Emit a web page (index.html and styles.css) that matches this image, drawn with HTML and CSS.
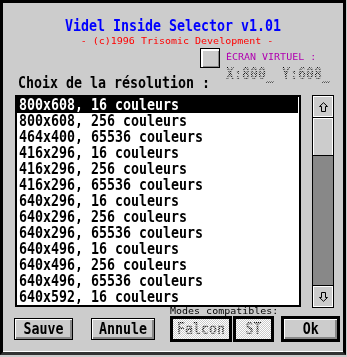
FILE: index.html
```html
<!DOCTYPE html>
<html>
<head>
<meta charset="utf-8">
<link rel="stylesheet" href="styles.css">
</head>
<body>
<div class="dialog">
  <div class="title"><span class="big">Videl Inside Selector v1.01</span></div>
  <div class="copy"><span class="small">- (c)1996 Trisomic Development -</span></div>
  <div class="top">
    <div class="virt">
      <div class="check"></div>
      <div class="virt-text">
        <div class="ecran"><span class="small">ÉCRAN VIRTUEL :</span></div>
        <div class="coords"><span class="big dith">X:800_ Y:608_</span></div>
      </div>
    </div>
    <div class="choix"><span class="big">Choix de la résolution :</span></div>
  </div>
  <div class="listrow">
    <ul class="list">
      <li class="sel"><span class="big">800x608, 16 couleurs</span></li>
      <li><span class="big">800x608, 256 couleurs</span></li>
      <li><span class="big">464x400, 65536 couleurs</span></li>
      <li><span class="big">416x296, 16 couleurs</span></li>
      <li><span class="big">416x296, 256 couleurs</span></li>
      <li><span class="big">416x296, 65536 couleurs</span></li>
      <li><span class="big">640x296, 16 couleurs</span></li>
      <li><span class="big">640x296, 256 couleurs</span></li>
      <li><span class="big">640x296, 65536 couleurs</span></li>
      <li><span class="big">640x496, 16 couleurs</span></li>
      <li><span class="big">640x496, 256 couleurs</span></li>
      <li><span class="big">640x496, 65536 couleurs</span></li>
      <li><span class="big">640x592, 16 couleurs</span></li>
    </ul>
    <div class="scroll">
      <div class="arrow up">
        <svg width="9" height="10" viewBox="0 0 9 10"><path d="M4.5 0.7 L8.5 4.5 L6.5 4.5 L6.5 9.5 L2.5 9.5 L2.5 4.5 L0.5 4.5 Z" fill="none" stroke="#000" stroke-width="1"/></svg>
      </div>
      <div class="track"><div class="thumb"></div></div>
      <div class="arrow down">
        <svg width="9" height="10" viewBox="0 0 9 10"><path d="M4.5 9.3 L8.5 5.5 L6.5 5.5 L6.5 0.5 L2.5 0.5 L2.5 5.5 L0.5 5.5 Z" fill="none" stroke="#000" stroke-width="1"/></svg>
      </div>
    </div>
  </div>
  <div class="bottom">
    <div class="btn sauve"><span class="big">Sauve</span></div>
    <div class="btn annule"><span class="big">Annule</span></div>
    <div class="modes">
      <div class="modes-label"><span class="small">Modes compatibles:</span></div>
      <div class="pair">
        <div class="btn dis falcon"><span class="big dith">Falcon</span></div>
        <div class="btn dis st"><span class="big dith">ST</span></div>
      </div>
    </div>
    <div class="btn ok"><span class="big">Ok</span></div>
  </div>
</div>
</body>
</html>
```

FILE: styles.css
```css
html, body {
  margin: 0;
  padding: 0;
}
body {
  width: 347px;
  height: 357px;
  overflow: hidden;
  background: #cccccc;
  font-family: "DejaVu Sans Mono", monospace;
}
.dialog {
  box-sizing: border-box;
  width: 346px;
  height: 355px;
  border: 3px solid #000;
  border-bottom-color: #333;
  background: #cccccc;
  box-shadow: inset 0 -1px #fff;
}
.big {
  display: block;
  font-family: "DejaVu Sans Mono", monospace;
  font-weight: bold;
  font-size: 13.3px;
  line-height: 16px;
  height: 16px;
  white-space: pre;
  transform: scaleY(1.15);
}
.small {
  display: block;
  font-family: "DejaVu Sans Mono", monospace;
  font-size: 10px;
  line-height: 8px;
  height: 8px;
  white-space: pre;
  transform: scaleY(0.8);
}
.dith {
  color: transparent;
  background: repeating-conic-gradient(#000 0 25%, transparent 0 50%) 0 0 / 2px 2px;
  -webkit-background-clip: text;
  background-clip: text;
}
.title {
  display: flex;
  justify-content: center;
  margin-top: 15px;
  height: 16px;
  color: #0000ff;
}
.copy {
  display: flex;
  justify-content: center;
  margin-top: 4px;
  height: 8px;
  padding-left: 8px;
  color: #ff0000;
}
.top {
  margin-top: 2px;
  height: 47px;
  display: grid;
  grid-template: 1fr / 1fr;
}
.top > * {
  grid-area: 1 / 1;
}
.choix {
  display: flex;
  align-self: end;
  justify-self: start;
  margin-left: 15px;
  margin-bottom: 4px;
  height: 16px;
}
.virt {
  align-self: start;
  justify-self: end;
  margin-right: 13px;
  display: flex;
}
.check {
  box-sizing: border-box;
  flex-shrink: 0;
  width: 20px;
  height: 20px;
  border: 1px solid #000;
  background: #cccccc;
  box-shadow: inset 1px 1px #fff, inset 2px 2px #fff, inset -1px -1px #888;
}
.virt-text {
  margin-left: 6px;
  flex-shrink: 0;
}
.ecran {
  display: flex;
  margin-top: 6px;
  height: 8px;
  color: #b000b0;
}
.coords {
  display: flex;
  margin-top: 4px;
  height: 16px;
}
.listrow {
  display: flex;
  margin-left: 12px;
  height: 212px;
}
.list {
  box-sizing: border-box;
  list-style: none;
  margin: 0;
  padding: 0;
  width: 286px;
  height: 212px;
  border: 2px solid #000;
  background: #fff;
  overflow: hidden;
  flex-shrink: 0;
}
.list li {
  display: flex;
  height: 16px;
  padding-left: 2px;
  color: #000;
}
.list li.sel {
  background: #000;
  color: #fff;
  margin-right: 1px;
}
.scroll {
  box-sizing: border-box;
  margin-left: 11px;
  width: 22px;
  height: 213px;
  border: 1px solid #000;
  display: flex;
  flex-direction: column;
  flex-shrink: 0;
}
.arrow {
  box-sizing: border-box;
  height: 22px;
  background: #cccccc;
  box-shadow: inset 1px 1px #fff, inset -1px -1px #fff;
  display: flex;
  align-items: center;
  justify-content: center;
}
.arrow svg { display: block; }
.up { border-bottom: 1px solid #000; }
.down { border-top: 1px solid #000; }
.track {
  flex: 1;
  background: #888888;
}
.thumb {
  box-sizing: border-box;
  height: 38px;
  background: #cccccc;
  border-bottom: 1px solid #000;
  box-shadow: inset 1px 1px #fff, inset -1px 0 #fff;
}
.bottom {
  display: flex;
  align-items: flex-start;
  height: 36px;
}
.btn {
  box-sizing: border-box;
  flex-shrink: 0;
  height: 22px;
  border: 1px solid #000;
  background: #cccccc;
  box-shadow: inset 1px 1px #fff, inset -2px -2px #888;
  display: flex;
  align-items: center;
  justify-content: center;
  color: #000;
}
.sauve {
  margin-top: 11px;
  margin-left: 11px;
  width: 59px;
}
.annule {
  margin-top: 11px;
  margin-left: 18px;
  width: 64px;
}
.modes {
  margin-top: 1px;
  margin-left: 15px;
  display: flex;
  flex-direction: column;
}
.modes-label {
  display: flex;
  height: 8px;
  color: #000;
}
.pair {
  display: flex;
}
.dis {
  border: 3px solid #000;
  height: 26px;
  box-shadow: none;
  background: repeating-conic-gradient(#fff 0 25%, #cccccc 0 50%) 0 0 / 2px 2px;
}
.dis .dith {
  background: repeating-conic-gradient(#000 0 25%, #cccccc 0 50%) 0 0 / 2px 2px;
  -webkit-background-clip: text;
  background-clip: text;
}
.falcon { width: 62px; }
.st { width: 41px; margin-left: 1px; }
.ok {
  margin-top: 9px;
  margin-left: 3px;
  width: 59px;
  height: 26px;
  border: 3px solid #000;
}
```
